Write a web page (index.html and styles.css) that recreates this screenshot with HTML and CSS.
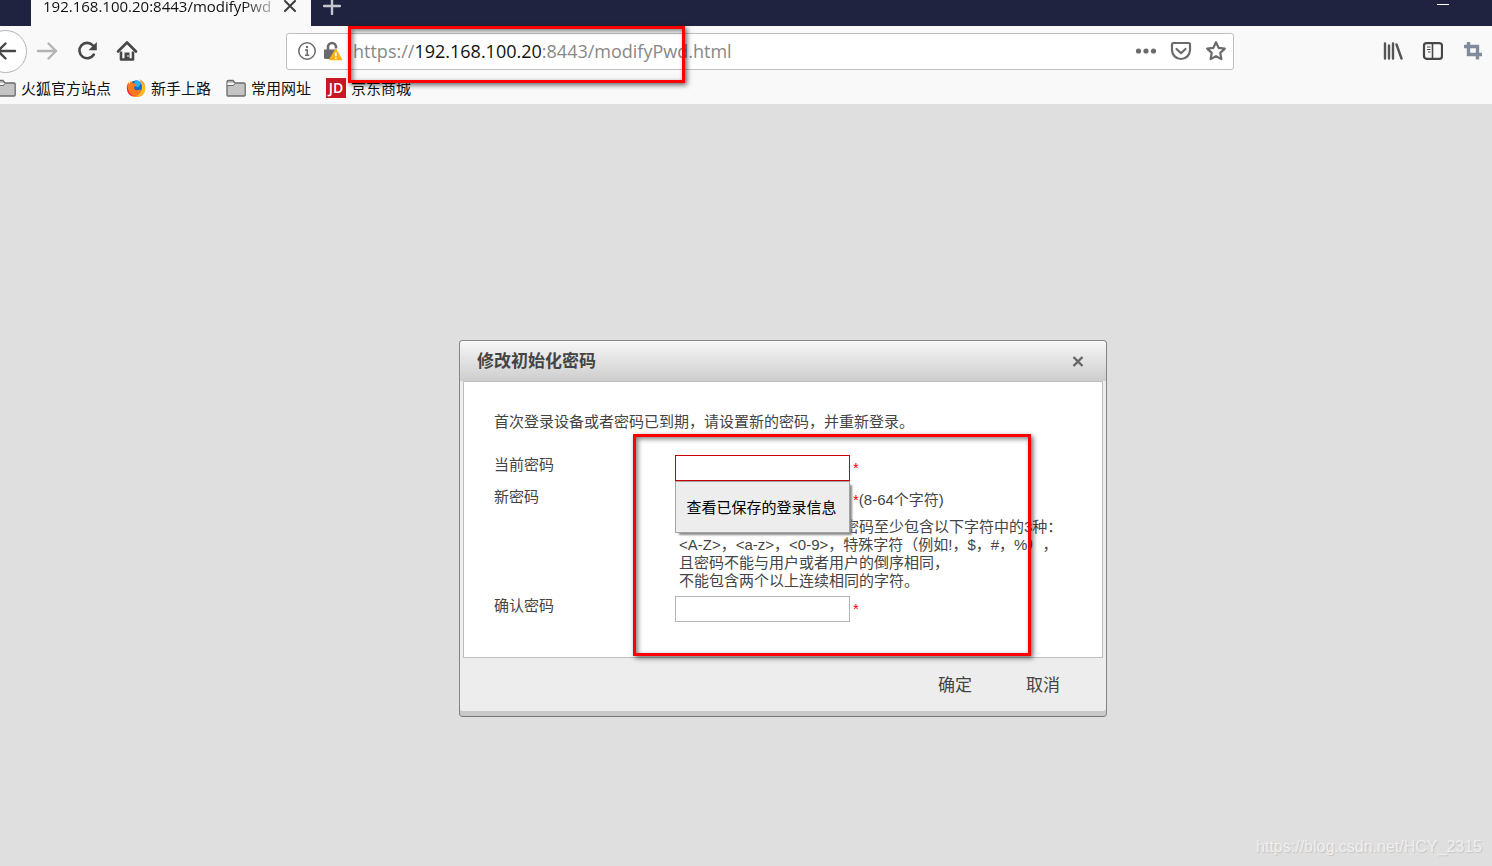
FILE: index.html
```html
<!DOCTYPE html>
<html lang="zh-CN">
<head>
<meta charset="utf-8">
<title>修改初始化密码</title>
<link rel="stylesheet" href="styles.css">
</head>
<body>
<header class="browser">
  <div class="titlebar">
    <div class="tab">
      <span class="tab-label">192.168.100.20:8443/modifyPwd</span>
      <button class="icon-btn tab-close" aria-label="关闭标签页">
        <svg width="14" height="14" viewBox="0 0 14 14"><path d="M2 2l10 10M12 2L2 12" stroke="#3c3c3c" stroke-width="2" stroke-linecap="round"/></svg>
      </button>
    </div>
    <button class="icon-btn new-tab" aria-label="新标签页">
      <svg width="18" height="18" viewBox="0 0 18 18"><path d="M9 1v16M1 9h16" stroke="#c6c6cd" stroke-width="2.400" stroke-linecap="round"/></svg>
    </button>
    <button class="icon-btn minimize" aria-label="最小化">
      <svg width="12" height="12" viewBox="0 0 12 12"><path d="M0 4.500h12" stroke="#fff" stroke-width="1"/></svg>
    </button>
  </div>

  <nav class="toolbar">
    <button class="icon-btn back" aria-label="后退">
      <svg width="22" height="20" viewBox="0 0 22 20"><path d="M20 10H3M10.500 2.500L3 10l7.500 7.500" fill="none" stroke="#474747" stroke-width="2.400" stroke-linecap="round" stroke-linejoin="round"/></svg>
    </button>
    <button class="icon-btn tool" aria-label="前进">
      <svg width="22" height="20" viewBox="0 0 22 20"><path d="M2 10h18M12.500 2.500L20 10l-7.500 7.500" fill="none" stroke="#b4b4b4" stroke-width="2.400" stroke-linecap="round" stroke-linejoin="round"/></svg>
    </button>
    <button class="icon-btn tool" aria-label="刷新">
      <svg width="22" height="22" viewBox="0 0 22 22"><path d="M17.800 14.500A7.700 7.700 0 1 1 16.800 5.300" fill="none" stroke="#474747" stroke-width="2.600" stroke-linecap="round"/><path d="M20.800 2v8.300H12.500z" fill="#474747"/></svg>
    </button>
    <button class="icon-btn tool" aria-label="主页">
      <svg width="22" height="22" viewBox="0 0 22 22"><path d="M2 11.500l9-9 9 9" fill="none" stroke="#474747" stroke-width="2.600" stroke-linecap="round" stroke-linejoin="round"/><path d="M5 11.500v8h12v-8" fill="none" stroke="#474747" stroke-width="2.600" stroke-linejoin="round"/><path d="M8.500 20v-7.500h5V20z" fill="#474747"/><path d="M11.500 15h1v2h-1z" fill="#fff"/></svg>
    </button>

    <div class="urlbar">
      <svg class="url-info" width="20" height="20" viewBox="0 0 20 20"><circle cx="10" cy="10" r="8.200" fill="none" stroke="#6b6b6b" stroke-width="1.500"/><circle cx="10" cy="6" r="1.200" fill="#6b6b6b"/><path d="M8 9h2.200v5M8 14.200h4.200" fill="none" stroke="#6b6b6b" stroke-width="1.500"/></svg>
      <svg class="url-lock" width="20" height="20" viewBox="0 0 20 20"><path d="M5 9.500V6a4 4 0 0 1 8 0v1.500" fill="none" stroke="#6b6b6b" stroke-width="2.600"/><path d="M1 8.500h12.500v9.500H2.500Q1 18 1 16.500z" fill="#6b6b6b"/><path d="M12.800 8.500L18.500 18.500H7z" fill="#ffb114" stroke="#ffb114" stroke-width="1.500" stroke-linejoin="round"/><path d="M12.800 11.500v3.800M12.800 16.500v1.600" stroke="#fff" stroke-width="1.700"/></svg>
      <span class="url"><span>https://</span><span class="host">192.168.100.20</span><span>:8443/modifyPwd.html</span></span>
      <button class="icon-btn url-btn" aria-label="更多操作">
        <svg width="22" height="22" viewBox="0 0 22 22" fill="#6b6b6b"><circle cx="3.500" cy="11" r="2.600"/><circle cx="11" cy="11" r="2.600"/><circle cx="18.500" cy="11" r="2.600"/></svg>
      </button>
      <button class="icon-btn url-btn" aria-label="保存到 Pocket">
        <svg width="22" height="22" viewBox="0 0 22 22" fill="none" stroke="#6b6b6b" stroke-width="2.200" stroke-linecap="round" stroke-linejoin="round"><path d="M3.500 3h15Q20 3 20 4.500V10a9 9 0 0 1-18 0V4.500Q2 3 3.500 3z"/><path d="M6.500 9l4.500 4.200L15.500 9"/></svg>
      </button>
      <button class="icon-btn url-btn" aria-label="加入书签">
        <svg width="22" height="22" viewBox="0 0 22 22" fill="none" stroke="#6b6b6b" stroke-width="2.200" stroke-linejoin="round"><path d="M11 2.200l2.600 5.600 6.200.8-4.500 4.300 1.100 6.200L11 16.200l-5.400 2.900 1.100-6.200L2.200 8.600l6.200-.8z"/></svg>
      </button>
      <div class="mark mark-url"></div>
    </div>

    <button class="icon-btn tool" aria-label="书库">
      <svg width="22" height="22" viewBox="0 0 22 22" stroke="#555" stroke-width="2.400" stroke-linecap="round"><path d="M4 3.500v15M8 5.500v13M12 3.500v15M15.500 4.500l5 14"/></svg>
    </button>
    <button class="icon-btn tool" aria-label="侧栏">
      <svg width="22" height="22" viewBox="0 0 22 22" fill="none" stroke="#474747"><rect x="3" y="3.200" width="18" height="15.600" rx="2.500" stroke-width="2.200"/><path d="M11.500 3v16" stroke-width="1.600"/><path d="M6 7h3.500M6 9.500h3.500M7 12h2.500" stroke-width="1.200"/></svg>
    </button>
    <button class="icon-btn tool" aria-label="截图">
      <svg width="22" height="22" viewBox="0 0 22 22" fill="none" stroke="#808c9c" stroke-width="3.400"><path d="M7.500 2v12.500H21M3 6.500h13.500V19.500"/></svg>
    </button>
  </nav>

  <nav class="bookmarks">
    <a class="bookmark" href="#"><svg width="20" height="20" viewBox="0 0 20 20"><path d="M1 17V4Q1 2.500 2.500 2.500H7L9 5h9q1.200 0 1.200 1.200V17Q19.200 18 18 18H2Q1 18 1 17z" fill="#c4c4c4" stroke="#6b6b6b" stroke-width="1.300"/><path d="M1.500 5H9l-1.500 2h-6z" fill="#f2f2f2"/><path d="M1 7.500h6.500L9 5.500" fill="none" stroke="#6b6b6b"/></svg>火狐官方站点</a>
    <a class="bookmark" href="#"><svg width="20" height="20" viewBox="0 0 20 20"><circle cx="10" cy="10" r="7.500" fill="#1769d2"/><path d="M9 2.500q4-1 6 3l-3 4-4-2z" fill="#21b5ed"/><path d="M2.500 3.500q0 2 1 2.500L5 2.500q.5 2.500 4 3l2 1.500-3 2q0 4 4 3 2-.5 3 0-1.500 3-5 3 5 0 6-5Q17 4 13 1q6 2.500 6.300 9-.3 9-9.300 9-8 0-9-8Q.7 6.500 2.500 3.500z" fill="#ff7a1f"/><path d="M14 2.500q6 4 5 10-2 6.500-9 6 5-2.500 6-7.500.5-4-2-8.500z" fill="#ffc21c"/><path d="M1.500 6q-.5 9 6.500 12.500Q1 17 .8 10 .8 8 1.500 6z" fill="#ef174f"/></svg>新手上路</a>
    <a class="bookmark" href="#"><svg width="20" height="20" viewBox="0 0 20 20"><path d="M1 17V4Q1 2.500 2.500 2.500H7L9 5h9q1.200 0 1.200 1.200V17Q19.200 18 18 18H2Q1 18 1 17z" fill="#c4c4c4" stroke="#6b6b6b" stroke-width="1.300"/><path d="M1.500 5H9l-1.500 2h-6z" fill="#f2f2f2"/><path d="M1 7.500h6.500L9 5.500" fill="none" stroke="#6b6b6b"/></svg>常用网址</a>
    <a class="bookmark" href="#"><span class="jd">JD</span>京东商城</a>
  </nav>
</header>

<main class="page">
  <form class="dialog">
    <div class="dialog-head">
      <h1 class="dialog-title">修改初始化密码</h1>
      <button type="button" class="icon-btn" aria-label="关闭">
        <svg width="12" height="12" viewBox="0 0 12 12"><path d="M1.500 1l9 9M10.500 1l-9 9" stroke="#666" stroke-width="2.400"/></svg>
      </button>
    </div>
    <div class="dialog-body">
      <p class="intro">首次登录设备或者密码已到期，请设置新的密码，并重新登录。</p>
      <div class="fields">
        <label for="current">当前密码</label>
        <div class="field">
          <input class="box box-active" id="current" type="password"><span class="req">*</span>
          <button type="button" class="saved">查看已保存的登录信息</button>
        </div>
        <label for="fresh">新密码</label>
        <div>
          <div class="field"><input class="box" id="fresh" type="password"><span class="req">*</span><span>(8-64个字符)</span></div>
          <p class="hint">密码至少包含以下字符中的3种：<br>&lt;A-Z&gt;，&lt;a-z&gt;，&lt;0-9&gt;，特殊字符（例如!，$，#，%），<br>且密码不能与用户或者用户的倒序相同，<br>不能包含两个以上连续相同的字符。</p>
        </div>
        <label for="confirm">确认密码</label>
        <div class="field"><input class="box" id="confirm" type="password"><span class="req">*</span></div>
      </div>
      <div class="mark mark-form"></div>
    </div>
    <div class="dialog-foot">
      <button type="button" class="action">确定</button>
      <button type="button" class="action">取消</button>
    </div>
  </form>
  <span class="watermark">https://blog.csdn.net/HCY_2315</span>
</main>
</body>
</html>
```
FILE: styles.css
```css
* { box-sizing: border-box; }

body {
  margin: 0;
  min-height: 100vh;
  display: flex;
  flex-direction: column;
  overflow: hidden;
  background: #dfdfdf;
  color: #444;
  font: 15px/18px "Liberation Sans", "Noto Sans CJK SC", sans-serif;
  text-spacing-trim: space-all;
}

button {
  font: inherit;
  color: inherit;
  border: 0;
  padding: 0;
  background: none;
}

svg { display: block; flex: none; }

.icon-btn { display: flex; align-items: center; justify-content: center; flex: none; }

.browser { background: #f9f9f9; font-family: "Open Sans", "Noto Sans CJK SC", sans-serif; }

/* Window title strip; its upper part lies above the viewport. */
.titlebar {
  display: flex;
  align-items: center;
  height: 40px;
  margin-top: -14px;
  padding: 0 43px 0 31px;
  background: #20233f;
}
.tab {
  display: flex;
  align-items: center;
  gap: 8px;
  width: 280px;
  height: 100%;
  padding: 0 14px 0 12px;
  background: #f9f9f9;
}
.tab-label {
  flex: 1;
  white-space: nowrap;
  font-size: 15px;
  line-height: 24px;
  color: #111;
  mask-image: linear-gradient(to right, #000 86%, transparent 104%);
}
.new-tab { margin-left: 12px; }
.minimize { margin-left: auto; }

.toolbar { display: flex; align-items: center; height: 50px; }
.tool { width: 40px; height: 40px; }
.back {
  width: 43px;
  height: 43px;
  margin-left: -16px;
  border: 1px solid #b4b4b4;
  border-radius: 50%;
  background: #fff;
}
.urlbar {
  position: relative;
  display: flex;
  align-items: center;
  flex: 1;
  height: 37px;
  margin: 0 138px 0 139px;
  padding: 0 6px 0 10px;
  border: 1px solid #bfbfbf;
  border-radius: 3px;
  background: #fff;
}
.url-lock { margin: 0 10px 0 6px; }
.url {
  flex: 1;
  white-space: nowrap;
  font-size: 18px;
  line-height: 24px;
  color: #888;
}
.host { color: #111; }
.url-btn { width: 22px; margin-left: 13px; }

.bookmarks { display: flex; gap: 15px; height: 28px; padding-bottom: 4px; margin-left: -4px; }
.bookmark {
  display: flex;
  align-items: center;
  gap: 5px;
  color: #111;
  text-decoration: none;
}
.jd {
  width: 20px;
  height: 20px;
  background: #c91623;
  color: #fff;
  font: 600 14px/20px "Open Sans", sans-serif;
  text-align: center;
}

.page {
  position: relative;
  flex: 1;
  display: flex;
  justify-content: center;
  align-items: flex-start;
  padding: 236px 0 0 74px;
}

.dialog {
  width: 648px;
  border: 1px solid #858585;
  border-radius: 4px;
  border-bottom-color: #777;
  background: #ededed;
  box-shadow: inset 0 -5px #c8c8c8;
  padding-bottom: 5px;
}
.dialog-head {
  display: flex;
  align-items: center;
  justify-content: space-between;
  height: 40px;
  padding: 0 22px 0 17px;
  border-top: 1px solid #fff;
  border-radius: 4px 4px 0 0;
  background: linear-gradient(#f6f6f6, #cdcdcd);
}
.dialog-title { margin: 0; font-size: 17px; line-height: 24px; }
.dialog-body {
  position: relative;
  margin: 0 3px;
  padding: 31px 30px 35px;
  border: 1px solid #bdbdbd;
  background: #fff;
}
.intro { margin: 0 0 24px; }
.fields { display: grid; grid-template-columns: 181px 1fr; row-gap: 6px; }
.fields label { padding-top: 1px; }
.field { position: relative; display: flex; align-items: center; height: 26px; }
.box {
  width: 175px;
  height: 26px;
  margin: 0 3px 0 0;
  border: 1px solid #b5b5b5;
  background: #fff;
}
.box-active { border-color: #c80000; }
.req { color: #f00; }
.saved {
  position: absolute;
  z-index: 1;
  top: 26px;
  left: 0;
  width: 175px;
  height: 52px;
  padding: 2px 2px 0 0;
  border: 1px solid #a3a3a3;
  background: #ededed;
  box-shadow: 3px 3px 2px -1px #888;
  color: #000;
}
.hint { margin: 5px 0 0 4px; text-indent: 165px; white-space: nowrap; }
.dialog-foot {
  display: flex;
  align-items: center;
  justify-content: flex-end;
  gap: 54px;
  height: 53px;
  padding: 3px 46px 0;
}
.action { font-size: 17px; line-height: 24px; }

/* Red callout frames */
.mark {
  position: absolute;
  z-index: 2;
  border: 3px solid #f00;
  pointer-events: none;
  box-shadow: 2px 2px 5px rgba(0, 0, 0, .6), inset 2px 2px 5px rgba(0, 0, 0, .5);
}
.mark-url { top: -8px; left: 61px; width: 337px; height: 57px; }
.mark-form { top: 52px; left: 169px; width: 398px; height: 222px; }

.watermark {
  position: absolute;
  right: 10px;
  bottom: 10px;
  font-size: 16px;
  color: #efefef;
  text-shadow: 1px 1px 1px #c4c4c4;
}
```
